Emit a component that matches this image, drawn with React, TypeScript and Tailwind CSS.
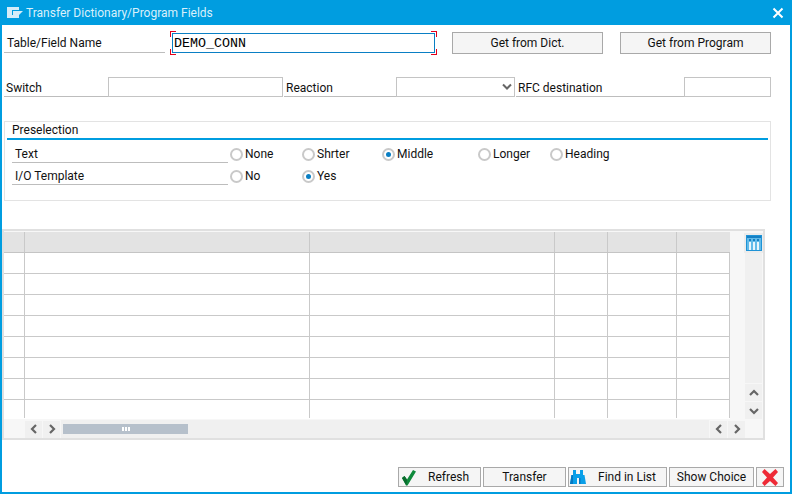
import React from "react";

const ui = "font-['Roboto','Open_Sans',sans-serif] text-[12px] text-[#111]";

function Field({ className = "" }: { className?: string }) {
  return <div className={"h-[20px] border border-[#c4c4c4] bg-white " + className} />;
}

function Label({ text, className = "" }: { text: string; className?: string }) {
  return (
    <div className={"h-[20px] pt-[2px] border-b border-[#bdbdbd] flex items-center leading-none " + className}>
      <span>{text}</span>
    </div>
  );
}

function Radio({ label, on = false, className = "" }: { label: string; on?: boolean; className?: string }) {
  return (
    <div className={"flex items-center h-[16px] " + className}>
      <span className="w-[13px] h-[13px] rounded-full border-2 border-[#c9c9c9] bg-white flex items-center justify-center shrink-0">
        {on && <span className="w-[5px] h-[5px] rounded-full bg-[#0a7fc4]" />}
      </span>
      <span className="ml-[2px]">{label}</span>
    </div>
  );
}

function Chevron({ dir }: { dir: "l" | "r" | "u" | "d" }) {
  const pts = {
    l: "7,1 3,5 7,9",
    r: "3,1 7,5 3,9",
    u: "1,7 5,3 9,7",
    d: "1,3 5,7 9,3",
  }[dir];
  return (
    <svg width="10" height="10" viewBox="0 0 10 10">
      <polyline points={pts} fill="none" stroke="#666" strokeWidth="2.2" />
    </svg>
  );
}

function ScrollBtn({ dir, className = "" }: { dir: "l" | "r" | "u" | "d"; className?: string }) {
  return (
    <div className={"w-[17px] h-[17px] bg-[#f0f0f0] flex items-center justify-center shrink-0 " + className}>
      <Chevron dir={dir} />
    </div>
  );
}

function Btn({ children, className = "" }: { children: React.ReactNode; className?: string }) {
  return (
    <div className={"h-[20px] border border-[#a9a9a9] bg-[#f5f5f5] flex items-center justify-center leading-none shrink-0 " + className}>
      {children}
    </div>
  );
}

const gridCols = "grid grid-cols-[21px_285px_245px_53px_69px_53px]";

export default function App() {
  return (
    <div className={"w-[792px] h-[494px] flex flex-col bg-white border-x-2 border-b-2 border-[#009de0] overflow-hidden " + ui}>
      {/* title bar */}
      <div className="h-[25px] bg-[#009de0] -mx-[2px] flex items-center shrink-0 px-[7px] text-[#d9f0fb]">
        <svg width="16" height="11" viewBox="0 0 16 11" className="shrink-0">
          <path d="M0 0h12v3H5v5h7v3H0z" fill="#d5ecf8" />
          <path d="M6 4h10l-4 4H6z" fill="#d5ecf8" />
        </svg>
        <span className="ml-[3px] leading-none flex-1">Transfer Dictionary/Program Fields</span>
        <svg width="12" height="12" viewBox="0 0 12 12" className="mr-[1px]">
          <path d="M1.5 1.5l9 9M10.5 1.5l-9 9" stroke="#fff" strokeWidth="2" />
        </svg>
      </div>

      {/* first row */}
      <div className="flex items-start h-[22px] mt-[7px] pl-[2px] shrink-0">
        <Label text="Table/Field Name" className="w-[161px] h-[21px] pl-[3px]" />
        <div className="relative ml-[7px] mt-[1px] w-[263px] h-[20px] pt-[1px] border border-[#0a7fc4] bg-white flex items-center pl-[1px] font-['Liberation_Mono',monospace] text-[13.33px] leading-none text-black">
          DEMO_CONN
          <span className="absolute -left-[3px] -top-[3px] w-[6px] h-[6px] border-l border-t border-[#e2001a]" />
          <span className="absolute -left-[3px] -bottom-[3px] w-[6px] h-[6px] border-l border-b border-[#e2001a]" />
          <span className="absolute -right-[3px] -top-[3px] w-[6px] h-[6px] border-r border-t border-[#e2001a]" />
          <span className="absolute -right-[3px] -bottom-[3px] w-[6px] h-[6px] border-r border-b border-[#e2001a]" />
        </div>
        <Btn className="ml-[17px] w-[151px] !h-[22px]">Get from Dict.</Btn>
        <Btn className="ml-[17px] w-[151px] !h-[22px]">Get from Program</Btn>
      </div>

      {/* second row */}
      <div className="flex h-[20px] mt-[23px] pl-[2px] shrink-0">
        <Label text="Switch" className="w-[104px] pl-[2px]" />
        <Field className="w-[175px]" />
        <Label text="Reaction" className="w-[112px] ml-[1px] pl-[2px]" />
        <div className="w-[119px] h-[20px] border border-[#c4c4c4] flex items-center justify-end pr-[2px]">
          <svg width="10" height="8" viewBox="0 0 10 8">
            <polyline points="1,1.5 5,5.5 9,1.5" fill="none" stroke="#666" strokeWidth="2" />
          </svg>
        </div>
        <Label text="RFC destination" className="w-[168px] ml-[1px] pl-[2px]" />
        <Field className="w-[87px]" />
      </div>

      {/* group */}
      <div className="ml-[2px] mt-[24px] w-[767px] h-[80px] border border-[#e3e3e3] shrink-0 px-[2px]">
        <div className="h-[16px] border-b-2 border-[#009de0] box-content pl-[5px] leading-[17px]">Preselection</div>
        <div className="flex items-center h-[22px] mt-[3px] pl-[5px]">
          <Label text="Text" className="w-[216px] self-start pl-[3px]" />
          <Radio label="None" className="ml-[2px] w-[72px]" />
          <Radio label="Shrter" className="w-[80px]" />
          <Radio label="Middle" on className="w-[96px]" />
          <Radio label="Longer" className="w-[72px]" />
          <Radio label="Heading" />
        </div>
        <div className="flex items-center h-[22px] pl-[5px]">
          <Label text="I/O Template" className="w-[216px] self-start pl-[3px]" />
          <Radio label="No" className="ml-[2px] w-[72px]" />
          <Radio label="Yes" on />
        </div>
      </div>

      {/* table */}
      <div className="mt-[28px] w-[763px] h-[211px] border-2 border-[#e0e0e0] bg-[#f7f7f7] shrink-0 pt-[1px] flex flex-col">
        <div className="flex h-[187px] shrink-0">
          <div className="w-[726px] bg-white shrink-0">
            <div className={gridCols + " h-[21px] bg-[#e3e3e3] border-b border-[#c4c4c4]"}>
              {[0, 1, 2, 3, 4].map((i) => (
                <div key={i} className="border-r border-[#c9c9c9]" />
              ))}
              <div />
            </div>
            {[0, 1, 2, 3, 4, 5, 6, 7].map((r) => (
              <div key={r} className={gridCols + (r < 7 ? " h-[21px] border-b border-[#c9c9c9]" : " h-[18px]")}>
                {[0, 1, 2, 3, 4, 5].map((i) => (
                  <div key={i} className="border-r border-[#c9c9c9]" />
                ))}
              </div>
            ))}
          </div>
          <div className="flex-1 flex flex-col items-end pr-[1px]">
            <div className="w-[19px] h-[20px] bg-[#ececec] flex items-center justify-center -mr-[1px] mt-[1px]">
              <svg width="16" height="16" viewBox="0 0 16 16">
                <rect width="16" height="16" fill="#1f93d6" />
                <rect x="1" y="1" width="14" height="14" fill="#62bbe9" />
                <rect x="1" y="1" width="14" height="2" fill="#1580c4" />
                <path d="M3 4h2v2H3zM7 4h2v2H7zM11 4h2v2h-2z" fill="#1580c4" />
                <path d="M3 7h2v8H3zM7 7h2v8H7zM11 7h2v8h-2z" fill="#e8f6fd" />
              </svg>
            </div>
            <div className="w-[17px] flex-1 bg-[#f0f0f0] mb-[1px]" />
            <ScrollBtn dir="u" className="mb-[1px]" />
            <ScrollBtn dir="d" />
          </div>
        </div>
        <div className="h-[18px] mt-[1px] flex items-center shrink-0">
          <div className="w-[21px] shrink-0" />
          <ScrollBtn dir="l" className="mr-[1px]" />
          <ScrollBtn dir="r" className="mr-[1px]" />
          <div className="w-[648px] h-[18px] bg-[#f0f0f0] flex items-center pl-[2px] shrink-0">
            <div className="w-[125px] h-[10px] bg-[#b6c0cb] flex items-center justify-center gap-[1px]">
              <span className="w-[2px] h-[4px] bg-white" />
              <span className="w-[2px] h-[4px] bg-white" />
              <span className="w-[2px] h-[4px] bg-white" />
            </div>
          </div>
          <ScrollBtn dir="l" className="mx-[1px]" />
          <ScrollBtn dir="r" />
        </div>
      </div>

      {/* footer */}
      <div className="flex mt-[27px] pl-[396px] gap-[2px] shrink-0">
        <Btn className="w-[83px] justify-start pl-[2px]">
          <svg width="16" height="17" viewBox="0 0 16 17" className="shrink-0">
            <path d="M1 9l2.500-2 2.500 3.500L12 1l3 1.500-8.500 14H5z" fill="#0f8a3c" />
            <path d="M1 9l2.500-2 2.500 3.500-.5 6z" fill="#0a6b2d" />
          </svg>
          <span className="ml-[11px]">Refresh</span>
        </Btn>
        <Btn className="w-[83px]">Transfer</Btn>
        <Btn className="w-[99px] justify-start pl-[1px]">
          <svg width="16" height="16" viewBox="0 0 16 16" className="shrink-0">
            <path d="M3 1h3v4h4V1h3v5h1.500L16 15H9V9H7v6H0l1.500-9H3z" fill="#0a9fe8" />
            <path d="M1.500 6H3v9H0zM9 9h1.500v6H9z" fill="#0578c2" />
          </svg>
          <span className="ml-[12px]">Find in List</span>
        </Btn>
        <Btn className="w-[85px]">Show Choice</Btn>
        <Btn className="w-[28px]">
          <svg width="18" height="17" viewBox="0 0 18 17">
            <path d="M1 3l2.500-3L9 5l5.500-5L17 3l-5 5.500 5 5.500-2.500 3L9 12l-5.500 5L1 14l5-5.500z" fill="#ee2a36" />
          </svg>
        </Btn>
      </div>
    </div>
  );
}
